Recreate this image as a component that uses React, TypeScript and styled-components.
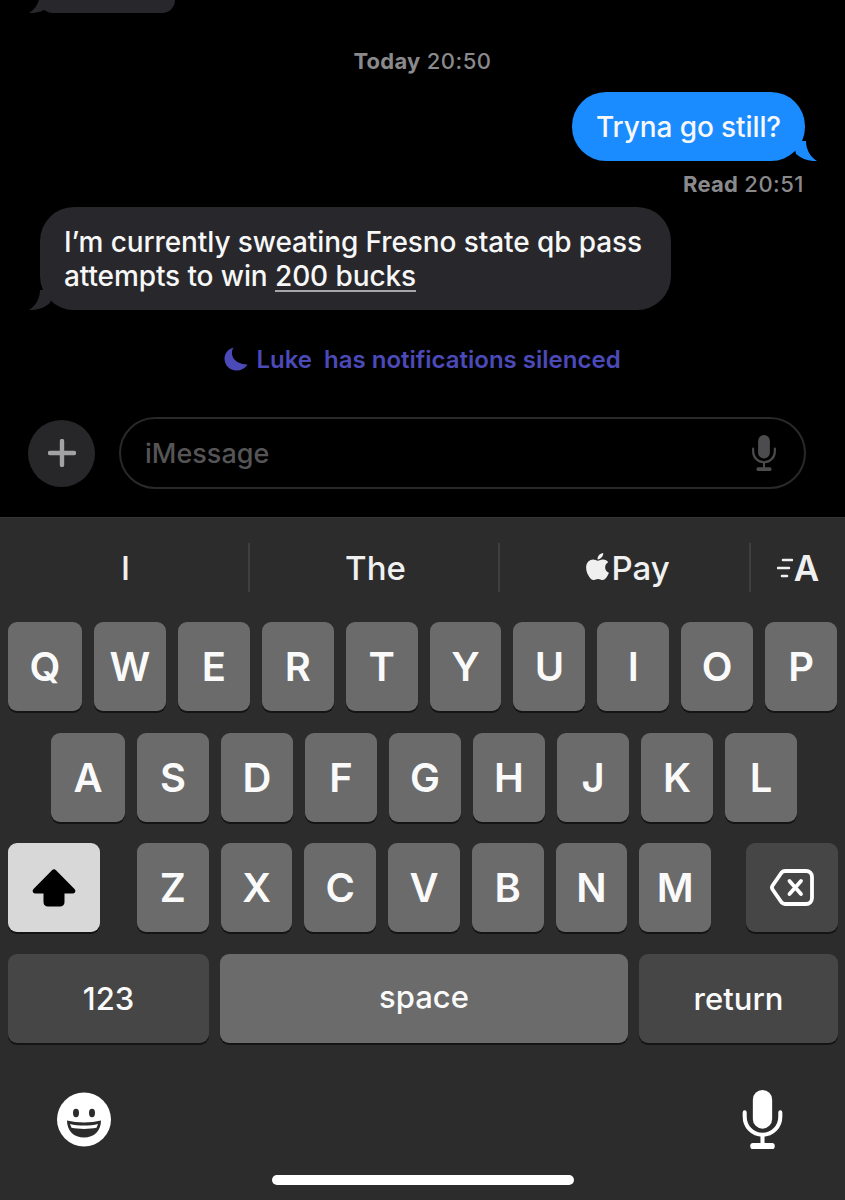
import React from "react";
import styled, { createGlobalStyle } from "styled-components";
import { FaApple } from "react-icons/fa";

const Global = createGlobalStyle`
  html, body { margin: 0; padding: 0; background: #000; }
  * { box-sizing: border-box; }
`;

const Page = styled.div`
  width: 845px;
  height: 1200px;
  overflow: hidden;
  display: flex;
  flex-direction: column;
  background: #000;
  font-family: Inter, "Liberation Sans", sans-serif;
  -webkit-font-smoothing: antialiased;
`;

const Chat = styled.main`
  height: 517px;
  display: flex;
  flex-direction: column;
`;

const Bubble = styled.div<{ $out?: boolean }>`
  position: relative;
  background: ${(p) => (p.$out ? "#1a8cff" : "#28282c")};
  color: #f7f7f7;
  font-size: 28px;
  font-weight: 500;
  letter-spacing: -0.1px;
  line-height: 34px;
  border-radius: 34px;
`;

const CutBubble = styled(Bubble)`
  width: 135px;
  height: 13px;
  margin-left: 40px;
  border-radius: 0 0 24px 24px;
`;

const OutBubble = styled(Bubble)`
  align-self: flex-end;
  margin: 18px 40px 0 0;
  height: 69px;
  width: 233px;
  display: flex;
  align-items: center;
  justify-content: center;
  white-space: nowrap;
`;

const InBubble = styled(Bubble)`
  align-self: flex-start;
  margin: 10px 0 0 40px;
  width: 631px;
  height: 103px;
  padding: 18px 0 0 24px;
  white-space: nowrap;
`;

const Tail = styled.svg<{ $out?: boolean }>`
  position: absolute;
  bottom: 0;
  width: 26px;
  height: 20px;
  ${(p) => (p.$out ? "right: -12px;" : "left: -11px; transform: scaleX(-1);")}
`;

const LinkText = styled.span`
  text-decoration: underline;
  text-decoration-color: #a6a6aa;
  text-decoration-thickness: 2px;
  text-underline-offset: 4px;
`;

const Stamp = styled.div`
  font-size: 22px;
  line-height: 26px;
  color: #8a8a8c;
  font-weight: 500;
  letter-spacing: 0.5px;
  b { font-weight: 700; letter-spacing: 0.2px; }
`;

const DayStamp = styled(Stamp)`
  margin-top: 35px;
  text-align: center;
`;

const ReadStamp = styled(Stamp)`
  margin: 10px 41px 0 0;
  text-align: right;
`;

const Silenced = styled.div`
  margin-top: 36px;
  height: 26px;
  display: flex;
  align-items: center;
  justify-content: center;
  gap: 8px;
  color: #4b4ab8;
  font-size: 24px;
  font-weight: 600;
  white-space: pre;
`;

const Composer = styled.div`
  margin-top: 45px;
  height: 72px;
  padding: 0 39px 0 28px;
  display: flex;
  align-items: center;
  gap: 24px;
`;

const PlusButton = styled.div`
  width: 67px;
  height: 67px;
  border-radius: 50%;
  background: #272729;
  display: flex;
  align-items: center;
  justify-content: center;
`;

const Field = styled.div`
  flex: 1;
  height: 72px;
  border: 2px solid #29292b;
  border-radius: 36px;
  display: flex;
  align-items: center;
  justify-content: space-between;
  padding: 0 27px 0 24px;
  color: #555557;
  font-size: 27px;
  font-weight: 500;
`;

const Keyboard = styled.section`
  flex: 1;
  background: #2c2c2c;
  border-top: 1px solid #353535;
  display: flex;
  flex-direction: column;
`;

const Suggestions = styled.div`
  margin-top: 25px;
  height: 49px;
  display: grid;
  grid-template-columns: 250px 250px 251px 94px;
`;

const Suggestion = styled.div<{ $last?: boolean }>`
  display: flex;
  align-items: center;
  justify-content: center;
  padding: 0 0 0 ${(p) => (p.$last ? 0 : 3)}px;
  color: #f0f0f0;
  font-size: 33px;
  font-weight: 500;
  border-right: ${(p) => (p.$last ? "none" : "2px solid #3f3f3f")};
`;

const AutoA = styled.span`
  display: flex;
  align-items: center;
  gap: 1px;
  font-size: 35px;
  font-weight: 600;
`;

const ApplePay = styled.span`
  display: flex;
  align-items: center;
  gap: 0;
  svg { margin-right: -2px; margin-top: -3px; }
`;

const Rows = styled.div`
  margin-top: 30px;
  display: flex;
  flex-direction: column;
  gap: 21.67px;
`;

const Row = styled.div<{ $pad: string; $gap?: number }>`
  height: 89px;
  display: flex;
  padding: ${(p) => p.$pad};
  gap: ${(p) => p.$gap ?? 12}px;
`;

const Key = styled.div<{ $tone?: "dark" | "light"; $w?: number; $small?: boolean }>`
  ${(p) => (p.$w ? `width: ${p.$w}px; flex: none;` : "flex: 1;")}
  border-radius: 9px;
  display: flex;
  align-items: center;
  justify-content: center;
  background: ${(p) => (p.$tone === "dark" ? "#464646" : p.$tone === "light" ? "#d8d8d8" : "#6b6b6b")};
  box-shadow: 0 2px 0 #141414;
  color: #fafafa;
  font-size: ${(p) => (p.$small ? 31 : 40)}px;
  font-weight: ${(p) => (p.$small ? 500 : 600)};
`;

const SpaceKey = styled(Key)`
  padding-bottom: 3px;
`;

const LetterGroup = styled.div`
  flex: 1;
  display: flex;
  gap: 12px;
  margin: 0 35px 0 37px;
`;

const Bottom = styled.div`
  margin-top: 47px;
  height: 59px;
  padding: 0 62px 0 57px;
  display: flex;
  align-items: center;
  justify-content: space-between;
`;

const HomeBar = styled.div`
  margin: 26px 0 0 272px;
  width: 302px;
  height: 10px;
  border-radius: 5px;
  background: #fff;
`;

const TailShape = ({ out }: { out?: boolean }) => (
  <Tail $out={out} viewBox="0 0 26 20">
    <path d="M4 0 H15 C15 8 19 16 26 20 C18 20.5 11 18 5 13 L2 0 Z" fill={out ? "#1a8cff" : "#28282c"} />
  </Tail>
);

const Mic = ({ w, h, color, sw }: { w: number; h: number; color: string; sw: number }) => (
  <svg width={w} height={h} viewBox="0 0 40 58" fill="none">
    <rect x="10.5" y="0" width="19" height="38" rx="9.5" fill={color} />
    <path d="M2.5 22 V26 C2.5 36 10 44 20 44 C30 44 37.5 36 37.5 26 V22" stroke={color} strokeWidth={sw} strokeLinecap="round" />
    <path d="M20 44 V53" stroke={color} strokeWidth={sw} />
    <rect x="8" y="52" width="24" height="6" rx="2.5" fill={color} />
  </svg>
);

const Moon = () => (
  <svg width="24" height="24" viewBox="0 0 24 24">
    <path d="M9.5 0.5 C5.5 7 9 17 23.5 17.5 C21 21.5 17 23.5 12.5 23.5 C5.5 23.5 0.5 18 0.5 11.5 C0.5 6.5 4 2 9.5 0.5 Z" fill="#4b4ab8" />
  </svg>
);

const Plus = () => (
  <svg width="28" height="28" viewBox="0 0 28 28">
    <path d="M14 2 V26 M2 14 H26" stroke="#a2a2a4" strokeWidth="4.4" strokeLinecap="round" />
  </svg>
);

const Lines = () => (
  <svg width="16" height="24" viewBox="0 0 16 24">
    <path d="M6 4 H15 M1 12 H12 M5 20 H10" stroke="#f0f0f0" strokeWidth="2.6" strokeLinecap="round" />
  </svg>
);

const Shift = () => (
  <svg width="44" height="38" viewBox="0 0 44 38">
    <path
      d="M20 1.2 C21.2 0 22.8 0 24 1.2 L42.5 20 C44.2 22 43.2 24.5 40.8 24.5 H32.5 V33 C32.5 35.8 30.8 37.5 28 37.5 H16 C13.2 37.5 11.5 35.8 11.5 33 V24.5 H3.2 C0.8 24.5 -0.2 22 1.5 20 Z"
      fill="#000"
    />
  </svg>
);

const Backspace = () => (
  <svg width="44" height="37" viewBox="0 0 44 37" fill="none">
    <path
      d="M15 2 H36 C39.5 2 42 4.5 42 8 V29 C42 32.5 39.5 35 36 35 H15 C13.5 35 12.5 34.4 11.5 33.4 L2.6 20.5 C1.8 19.3 1.8 17.7 2.6 16.5 L11.5 3.6 C12.5 2.6 13.5 2 15 2 Z"
      stroke="#fff"
      strokeWidth="3.8"
    />
    <path d="M19.5 12 L31 25 M31 12 L19.5 25" stroke="#fff" strokeWidth="3.8" strokeLinecap="round" />
  </svg>
);

const Emoji = () => (
  <svg width="54" height="55" viewBox="0 0 54 55">
    <circle cx="27" cy="27.5" r="27" fill="#fff" />
    <ellipse cx="19" cy="21" rx="3" ry="4.2" fill="#2c2c2c" />
    <ellipse cx="35" cy="21" rx="3" ry="4.2" fill="#2c2c2c" />
    <path d="M10 28.5 C20 31 34 31 44 28.5 C44 39 37 45.5 27 45.5 C17 45.5 10 39 10 28.5 Z" fill="#2c2c2c" />
    <path d="M13 32 C21 34 33 34 41 32 L39.5 35.8 C32 37.3 22 37.3 14.5 35.8 Z" fill="#fff" />
  </svg>
);

const row1 = "WERTYUIOP".split("");
const row2 = "SDFGHJKL".split("");
const row3 = "ZXCVBNM".split("");

export default function App() {
  return (
    <Page>
      <Global />
      <Chat>
        <CutBubble>
          <TailShape />
        </CutBubble>
        <DayStamp>
          <b>Today</b> 20:50
        </DayStamp>
        <OutBubble $out>
          Tryna go still?
          <TailShape out />
        </OutBubble>
        <ReadStamp>
          <b>Read</b> 20:51
        </ReadStamp>
        <InBubble>
          I’m currently sweating Fresno state qb pass
          <br />
          attempts to win <LinkText>200 bucks</LinkText>
          <TailShape />
        </InBubble>
        <Silenced>
          <Moon />
          <span>Luke  has notifications silenced</span>
        </Silenced>
        <Composer>
          <PlusButton>
            <Plus />
          </PlusButton>
          <Field>
            <span>iMessage</span>
            <Mic w={26} h={36} color="#4c4c4e" sw={3.4} />
          </Field>
        </Composer>
      </Chat>
      <Keyboard>
        <Suggestions>
          <Suggestion>I</Suggestion>
          <Suggestion>The</Suggestion>
          <Suggestion>
            <ApplePay>
              <FaApple size={31} />
              Pay
            </ApplePay>
          </Suggestion>
          <Suggestion $last>
            <AutoA>
              <Lines />A
            </AutoA>
          </Suggestion>
        </Suggestions>
        <Rows>
          <Row $pad="0 8px">
            <Key $w={74}>Q</Key>
            {row1.map((k) => (
              <Key key={k}>{k}</Key>
            ))}
          </Row>
          <Row $pad="0 48px 0 51px">
            <Key $w={74}>A</Key>
            {row2.map((k) => (
              <Key key={k}>{k}</Key>
            ))}
          </Row>
          <Row $pad="0 7px 0 8px" $gap={0}>
            <Key $tone="light" $w={92}>
              <Shift />
            </Key>
            <LetterGroup>
              {row3.map((k) => (
                <Key key={k}>{k}</Key>
              ))}
            </LetterGroup>
            <Key $tone="dark" $w={92}>
              <Backspace />
            </Key>
          </Row>
          <Row $pad="0 7px 0 8px" $gap={11}>
            <Key $tone="dark" $w={201} $small>
              123
            </Key>
            <SpaceKey $small>space</SpaceKey>
            <Key $tone="dark" $w={199} $small>
              return
            </Key>
          </Row>
        </Rows>
        <Bottom>
          <Emoji />
          <Mic w={41} h={59} color="#fff" sw={4} />
        </Bottom>
        <HomeBar />
      </Keyboard>
    </Page>
  );
}
